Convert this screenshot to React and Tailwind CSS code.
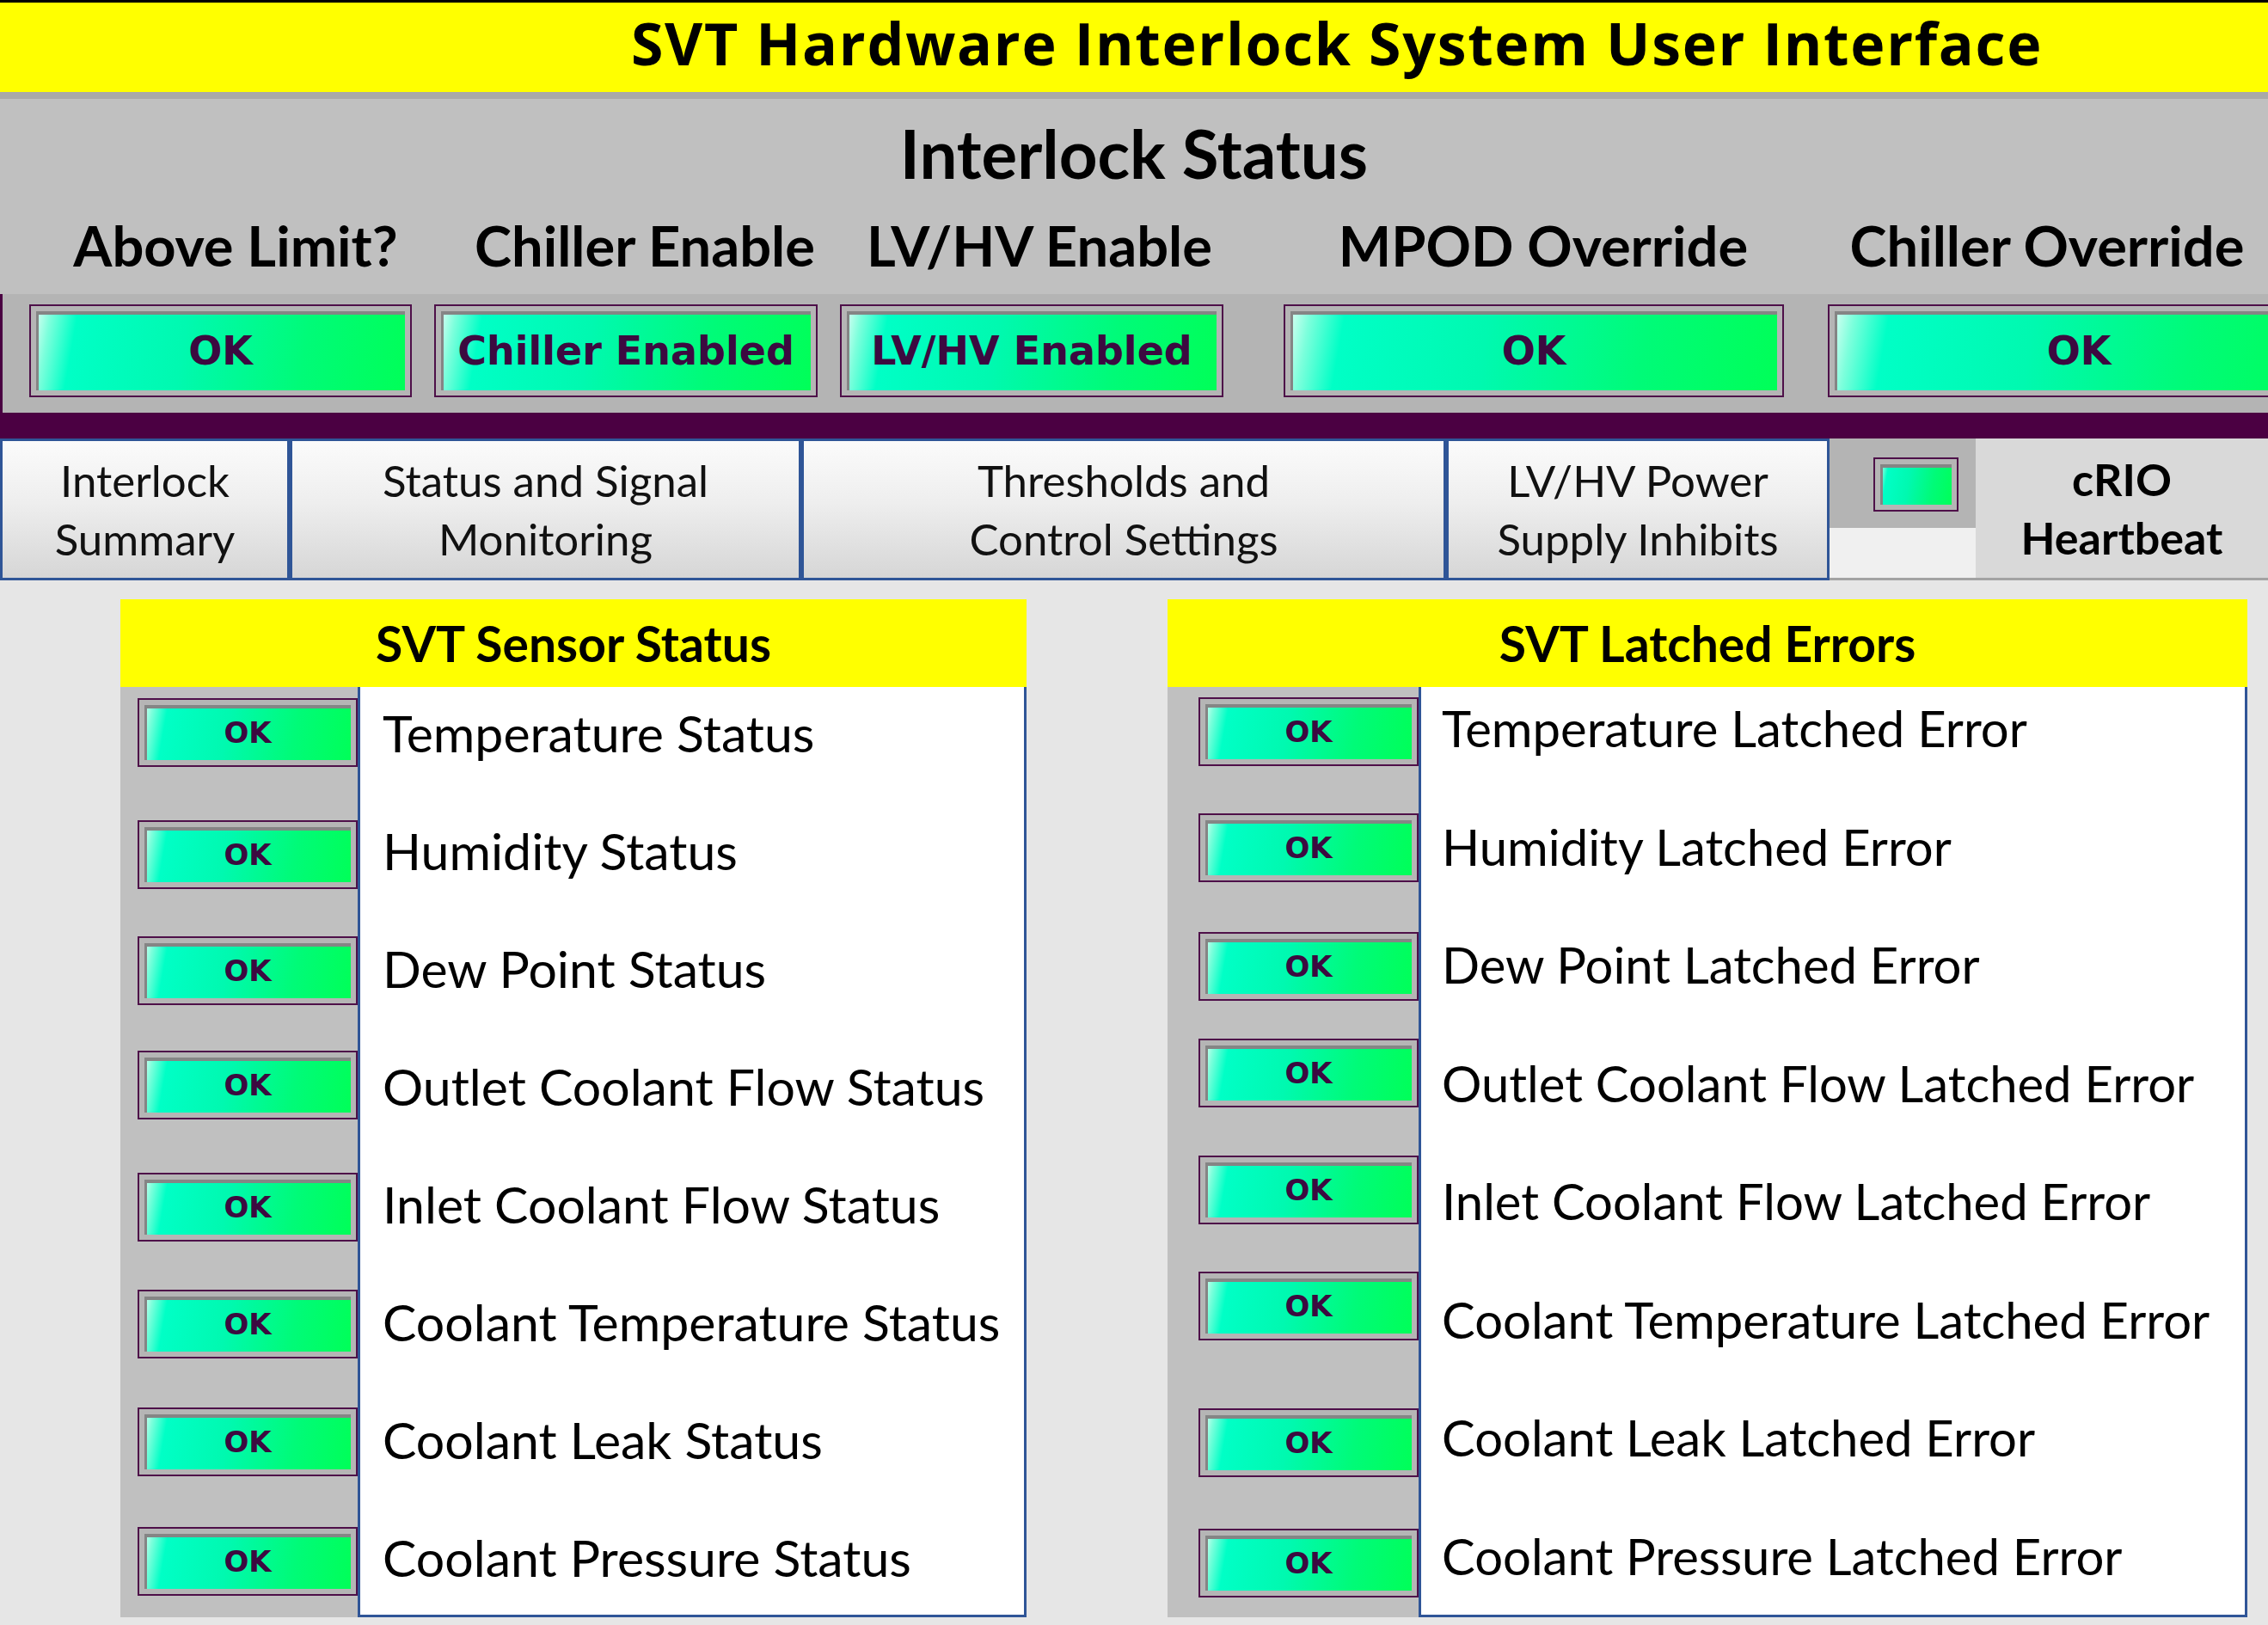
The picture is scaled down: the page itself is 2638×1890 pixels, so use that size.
import React from "react";

const headers = [
  { label: "Above Limit?", w: "w-[548px]" },
  { label: "Chiller Enable", w: "w-[404px]" },
  { label: "LV/HV Enable", w: "w-[514px]" },
  { label: "MPOD Override", w: "w-[658px]" },
  { label: "Chiller Override", w: "w-[514px]" },
];

const topButtons = [
  { label: "OK", cls: "w-[445px]" },
  { label: "Chiller Enabled", cls: "w-[446px] ml-[26px]" },
  { label: "LV/HV Enabled", cls: "w-[446px] ml-[26px]" },
  { label: "OK", cls: "w-[582px] ml-[70px]" },
  { label: "OK", cls: "w-[584px] ml-[51px]" },
];

const tabs = [
  { lines: ["Interlock", "Summary"], w: "w-[337px]" },
  { lines: ["Status and Signal", "Monitoring"], w: "w-[595px]" },
  { lines: ["Thresholds and", "Control Settings"], w: "w-[750px]" },
  { lines: ["LV/HV Power", "Supply Inhibits"], w: "w-[446px]" },
];

const sensorRows = [
  { label: "Temperature Status", mt: "mt-[13px]" },
  { label: "Humidity Status", mt: "mt-[62px]" },
  { label: "Dew Point Status", mt: "mt-[55px]" },
  { label: "Outlet Coolant Flow Status", mt: "mt-[53px]" },
  { label: "Inlet Coolant Flow Status", mt: "mt-[62px]" },
  { label: "Coolant Temperature Status", mt: "mt-[56px]" },
  { label: "Coolant Leak Status", mt: "mt-[57px]" },
  { label: "Coolant Pressure Status", mt: "mt-[59px]" },
];

const latchedRows = [
  { label: "Temperature Latched Error", mt: "mt-[12px]" },
  { label: "Humidity Latched Error", mt: "mt-[55px]" },
  { label: "Dew Point Latched Error", mt: "mt-[58px]" },
  { label: "Outlet Coolant Flow Latched Error", mt: "mt-[44px]" },
  { label: "Inlet Coolant Flow Latched Error", mt: "mt-[56px]" },
  { label: "Coolant Temperature Latched Error", mt: "mt-[55px]" },
  { label: "Coolant Leak Latched Error", mt: "mt-[79px]" },
  { label: "Coolant Pressure Latched Error", mt: "mt-[60px]" },
];

// LabVIEW-style boolean indicator: purple frame, grey bevel, green glossy face
function Indicator({ label, className = "", textClass = "" }) {
  return (
    <div className={`shrink-0 border-2 border-[#4e1049] bg-[#b5b5b5] p-[6px] ${className}`}>
      <div className="h-full flex items-center justify-center bg-[linear-gradient(100deg,#d8fff2_0%,#7dffdc_4%,#00ffc6_11%,#00f9b0_40%,#00fb78_72%,#00ff58_100%)] shadow-[inset_3px_4px_0_#858585]">
        {label && (
          <span className={`font-['DejaVu_Sans',sans-serif] font-bold leading-none text-[#3c0a40] whitespace-nowrap ${textClass}`}>
            {label}
          </span>
        )}
      </div>
    </div>
  );
}

function Panel({ title, rows, className, colWidth, colPad, textPad, textSize }) {
  return (
    <div className={`flex flex-col h-[1184px] ${className}`}>
      <div className="h-[102px] bg-[#ffff00] flex items-center justify-center">
        <h3 className="font-bold text-[57px] leading-none">{title}</h3>
      </div>
      <div className="flex-1 flex">
        <div className={`${colWidth} ${colPad} bg-[#c0c0c0] flex flex-col`}>
          {rows.map((r, i) => (
            <Indicator key={i} label="OK" className={`w-[256px] h-[80px] ${r.mt}`} textClass="text-[34px]" />
          ))}
        </div>
        <div className={`flex-1 bg-white border-[3px] border-t-0 border-[#2f5597] flex flex-col justify-between ${textPad}`}>
          {rows.map((r, i) => (
            <div key={i} className={`h-[70px] leading-[70px] whitespace-nowrap ${textSize}`}>
              {r.label}
            </div>
          ))}
        </div>
      </div>
    </div>
  );
}

export default function App() {
  return (
    <div className="w-[2638px] h-[1890px] overflow-hidden bg-[#e6e6e6] font-['Lato',sans-serif] text-black flex flex-col">
      {/* Title bar */}
      <header className="h-[107px] shrink-0 border-t-[3px] border-black bg-[#ffff00] flex items-center justify-center pl-[472px] pb-[10px]">
        <h1 className="font-['Open_Sans',sans-serif] font-bold text-[68px] leading-none tracking-[1.7px] whitespace-nowrap">
          SVT Hardware Interlock System User Interface
        </h1>
      </header>
      <div className="h-[8px] shrink-0 bg-[#a9a9a9]" />

      {/* Interlock status */}
      <section className="h-[227px] shrink-0 bg-[#c0c0c0] flex flex-col">
        <h2 className="pt-[24px] text-center font-bold text-[78px] leading-none">Interlock Status</h2>
        <div className="mt-[36px] flex">
          {headers.map((h) => (
            <div key={h.label} className={`${h.w} shrink-0 text-center font-bold text-[65px] leading-none whitespace-nowrap`}>
              {h.label}
            </div>
          ))}
        </div>
      </section>
      <div className="h-[138px] shrink-0 bg-[#b4b4b4] border-l-[3px] border-[#4a0042] flex items-start pt-[12px] pl-[31px]">
        {topButtons.map((b, i) => (
          <Indicator key={i} label={b.label} className={`h-[108px] ${b.cls}`} textClass="text-[46px]" />
        ))}
      </div>
      <div className="h-[30px] shrink-0 bg-[#4b0042]" />

      {/* Tabs */}
      <nav className="h-[165px] shrink-0 flex">
        {tabs.map((t) => (
          <div
            key={t.lines[0]}
            className={`${t.w} shrink-0 border-[3px] border-[#2f5597] bg-[linear-gradient(180deg,#fbfbfb_0%,#eeeeee_45%,#d6d6d6_100%)] flex flex-col items-center justify-center text-[51px] leading-[68px] text-[#111]`}
          >
            {t.lines.map((l) => (
              <span key={l} className="whitespace-nowrap">{l}</span>
            ))}
          </div>
        ))}
        <div className="flex-1 flex border-b-[3px] border-[#a3a3a3]">
          <div className="w-[170px] flex flex-col">
            <div className="h-[104px] bg-[#b4b4b4] pl-[51px] pt-[22px]">
              <Indicator className="w-[99px] h-[63px]" />
            </div>
            <div className="flex-1 bg-[#f0f0f0]" />
          </div>
          <div className="flex-1 bg-[#d9d9d9] flex flex-col items-center justify-center font-bold text-[52px] leading-[68px]">
            <span>cRIO</span>
            <span>Heartbeat</span>
          </div>
        </div>
      </nav>

      {/* Status panels */}
      <main className="flex-1 flex pt-[22px]">
        <Panel
          title="SVT Sensor Status"
          rows={sensorRows}
          className="ml-[140px] w-[1054px]"
          colWidth="w-[276px]"
          colPad="pl-[20px]"
          textPad="pt-[19px] pb-[31px] pl-[26px]"
          textSize="text-[59px]"
        />
        <Panel
          title="SVT Latched Errors"
          rows={latchedRows}
          className="ml-[164px] w-[1256px]"
          colWidth="w-[292px]"
          colPad="pl-[36px]"
          textPad="pt-[13px] pb-[33px] pl-[24px]"
          textSize="text-[58px]"
        />
      </main>
    </div>
  );
}
